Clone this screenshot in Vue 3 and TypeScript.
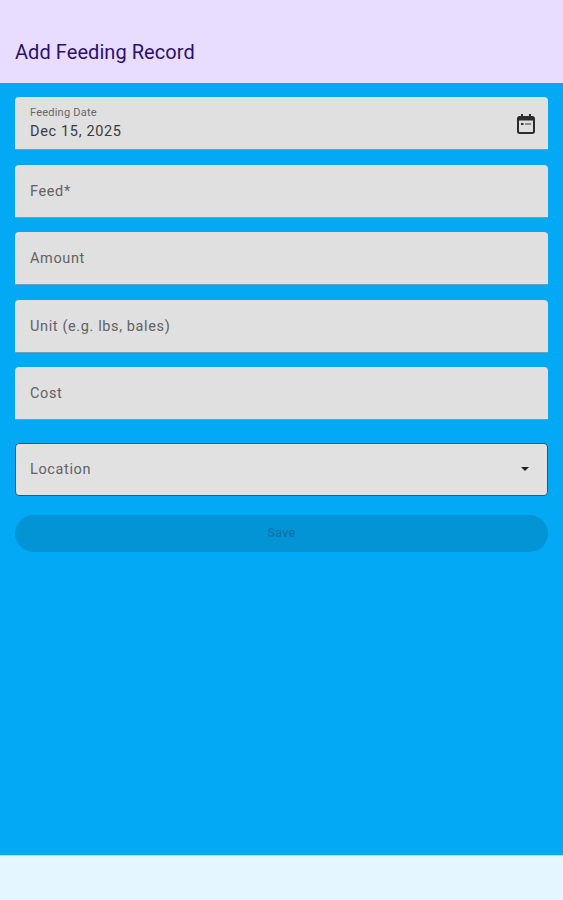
<script setup lang="ts">
const fields: string[] = ['Feed*', 'Amount', 'Unit (e.g. lbs, bales)', 'Cost']
</script>

<template>
  <div class="page">
    <header class="top"><h1>Add Feeding Record</h1></header>
    <main class="content">
      <div class="fields">
        <div class="field date">
          <div class="stack">
            <span class="small">Feeding Date</span>
            <span class="value">Dec 15, 2025</span>
          </div>
          <svg class="cal" viewBox="0 0 18 20" width="18" height="20" aria-hidden="true">
            <path fill="#2d2d30" fill-rule="evenodd" d="M4 0h2v2h6V0h2v2h1.500C16.900 2 18 3.100 18 4.500v13c0 1.400-1.100 2.500-2.500 2.500h-13C1.100 20 0 18.900 0 17.500v-13C0 3.100 1.100 2 2.500 2H4V0zM2 6.500v11c0 .3.200.5.500.5h13c.3 0 .5-.2.500-.5v-11H2z" />
            <path fill="#2d2d30" d="M4 9h2.500v2H4z" />
            <path fill="#8a8a8e" d="M8 9h6v2H8z" />
          </svg>
        </div>
        <div v-for="f in fields" :key="f" class="field"><span class="label">{{ f }}</span></div>
      </div>
      <div class="field select">
        <span class="label">Location</span>
        <svg viewBox="0 0 10 5" width="8" height="4" aria-hidden="true"><path fill="#222" d="M0 0h10L5 5z" /></svg>
      </div>
      <button class="save" type="button" disabled>Save</button>
    </main>
    <footer class="bottom"></footer>
  </div>
</template>

<style>
html, body { margin: 0; }
</style>

<style scoped>
.page {
  width: 563px;
  height: 900px;
  display: flex;
  flex-direction: column;
  background: #03a9f4;
  font-family: Roboto, "Liberation Sans", sans-serif;
}
.top {
  height: 83px;
  flex: none;
  box-sizing: border-box;
  background: #e9ddff;
  padding: 39px 15px 0;
}
h1 {
  margin: 0;
  font-size: 20px;
  line-height: 26px;
  font-weight: 400;
  letter-spacing: 0.06px;
  color: #2a1070;
}
.content {
  flex: 1;
  padding: 14px 15px 0;
  display: flex;
  flex-direction: column;
}
.fields {
  display: flex;
  flex-direction: column;
  gap: 15.5px;
}
.field {
  height: 52px;
  box-sizing: border-box;
  background: #e0e0e0;
  border-radius: 4px 4px 0 0;
  box-shadow: 0 1px 0 #6f9db5;
  padding: 1px 15px 0;
  display: flex;
  align-items: center;
  justify-content: space-between;
}
.label {
  font-size: 14.5px;
  letter-spacing: 0.62px;
  color: #626265;
}
.stack {
  display: flex;
  flex-direction: column;
  padding-top: 2px;
}
.small {
  font-size: 11px;
  line-height: 14px;
  letter-spacing: 0.22px;
  color: #66666a;
}
.value {
  font-size: 14.5px;
  line-height: 23px;
  letter-spacing: 0.66px;
  color: #3a3a3e;
}
.date {
  padding-right: 13px;
  padding-top: 1px;
}
.select {
  height: 52.5px;
  margin-top: 24px;
  border: 1px solid #275a78;
  border-radius: 4px;
  box-shadow: none;
  padding: 0 18px 0 14px;
  background: #e2e1e1;
}
.save {
  margin-top: 19.5px;
  height: 37px;
  border: 0;
  border-radius: 19px;
  background: #0394d6;
  color: #0a74aa;
  font: 500 12.5px Roboto, "Liberation Sans", sans-serif;
  letter-spacing: 0.3px;
  padding: 0 0 2px;
}
.bottom {
  height: 45px;
  flex: none;
  background: #e4f6ff;
  border-top: 1px solid #a6e0fb;
  box-sizing: border-box;
}
</style>
